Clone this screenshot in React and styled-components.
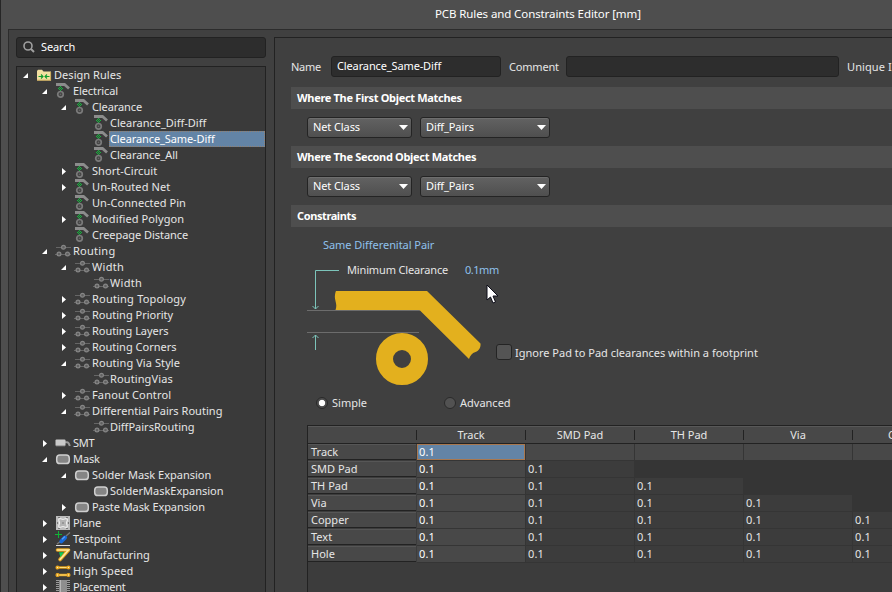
import React from "react"
import styled, { createGlobalStyle, css } from "styled-components"

const GlobalStyle = createGlobalStyle`
  * {
    box-sizing: border-box;
  }
  body {
    margin: 0;
    background: #4e4e4e;
    color: #e6e6e6;
    font-family: "Noto Sans", "Open Sans", sans-serif;
    font-size: 11px;
    line-height: 16px;
  }
`

const Window = styled.div`
  width: 892px;
  height: 592px;
  display: flex;
  flex-direction: column;
  overflow: hidden;
  border-left: 1px solid #262626;
  white-space: nowrap;
`

const TitleBar = styled.header`
  flex: 0 0 29px;
  padding: 6px 0 0 434px;
  color: #fff;
  font-size: 11.5px;
  letter-spacing: -0.1px;
`

const Body = styled.div`
  flex: 1;
  min-height: 0;
  display: flex;
  gap: 8px;
  margin-left: 7px;
  padding: 7px 0 0 7px;
  border-top: 1px solid #2c2c2c;
  border-left: 1px solid #2c2c2c;
  background: #404040;
`

const Sidebar = styled.aside`
  flex: 0 0 250px;
  min-height: 0;
  display: flex;
  flex-direction: column;
  gap: 8px;
`

const fieldStyles = css`
  height: 21px;
  border: 1px solid #222;
  border-radius: 3px;
  background: #2d2d2d;
  color: #fff;
`

const SearchBox = styled.div`
  ${fieldStyles}
  flex: none;
  display: flex;
  align-items: center;
  gap: 6px;
  padding: 0 0 1px 6px;
  letter-spacing: -0.1px;
`

const Tree = styled.div`
  flex: 1;
  min-height: 0;
  overflow: hidden;
  border: 1px solid #222;
  border-bottom: 0;
  background: #3a3a3a;
`

const TreeRow = styled.div`
  display: flex;
  height: 16px;
  padding-left: ${({ $level }) => 6 + $level * 19}px;
`

const TreeLabel = styled.span`
  flex: ${({ $selected }) => ($selected ? 1 : "none")};
  margin-left: ${({ $level }) => ($level === 3 ? 0 : 1)}px;
  padding-left: 1px;
  letter-spacing: ${({ $track }) => $track || 0}px;
  ${({ $selected }) =>
    $selected &&
    css`
      background: #6384a6;
      color: #fff;
      outline: 1px dotted #94806e;
      outline-offset: -1px;
    `}
`

const Icon = styled.svg`
  flex: none;
  display: block;
`

const Details = styled.main`
  flex: 1;
  min-width: 0;
  display: flex;
  flex-direction: column;
  padding-left: 16px;
  border-top: 1px solid #222;
  border-left: 1px solid #222;
`

const NameRow = styled.div`
  display: flex;
  align-items: center;
  height: 21px;
  margin: 18px 0 10px;
`

const FieldLabel = styled.span`
  flex: none;
  width: ${({ $width }) => $width}px;
  padding-top: 1px;
  letter-spacing: ${({ $track }) => $track || 0}px;
`

const Field = styled.div`
  ${fieldStyles}
  flex: 0 0 ${({ $width }) => $width}px;
  margin-right: 8px;
  padding: 1px 5px;
  letter-spacing: -0.13px;
`

const SectionTitle = styled.h2`
  flex: none;
  height: 22px;
  margin: 0;
  padding: 3px 6px;
  background: #4e4e4e;
  color: #fff;
  font-size: 11px;
  line-height: 16px;
  font-weight: 700;
  letter-spacing: ${({ $track }) => $track}px;
`

const ComboRow = styled.div`
  display: flex;
  gap: 8px;
  padding: 8px 0 8px 16px;
`

const ComboBox = styled.div`
  display: flex;
  align-items: center;
  justify-content: space-between;
  width: ${({ $width }) => $width}px;
  height: 21px;
  padding: 0 3px 1px 5px;
  border: 1px solid #242424;
  border-radius: 3px;
  background: linear-gradient(#626262, #4f4f4f);
  box-shadow: inset 0 1px #6e6e6e;
  color: #fff;
  letter-spacing: -0.1px;
`

const Link = styled.span`
  color: #8fc0ec;
`

const PairTitle = styled.div`
  padding: 10px 0 0 32px;
  height: 35px;
  letter-spacing: -0.05px;
`

const Diagram = styled.div`
  position: relative;
  display: flex;
  height: 126px;
  padding-left: 16px;
`

/* sits over the clearance drawing */
const DiagramCaption = styled.div`
  position: absolute;
  left: 56px;
  top: 0;
  display: flex;
  gap: 17px;
  letter-spacing: -0.15px;

  ${Link} {
    letter-spacing: -0.5px;
  }
`

const Pointer = styled.svg`
  position: absolute;
  left: 195px;
  top: 22px;
`

const CheckOption = styled.label`
  display: flex;
  align-items: center;
  gap: 3px;
  height: 16px;
  margin: 82px 0 0 9px;

  span {
    padding-top: 2px;
  }
`

const CheckBox = styled.i`
  width: 16px;
  height: 16px;
  border: 1px solid #242424;
  border-radius: 3px;
  background: #545454;
`

const RadioRow = styled.div`
  display: flex;
  height: 37px;
  padding: 7px 0 0 25px;
`

const RadioOption = styled.label`
  display: flex;
  align-items: center;
  gap: 4px;
  width: 128px;
  height: 16px;
`

const RadioDot = styled.i`
  width: 12px;
  height: 12px;
  border: 1px solid #2a2a2a;
  border-radius: 50%;
  background: ${({ $checked }) =>
    $checked ? "radial-gradient(#fff 0 2.8px, #4c4c4c 3.6px)" : "#525252"};
`

const Matrix = styled.div`
  flex: 1;
  min-height: 0;
  margin-left: 16px;
  overflow: hidden;
  border-top: 1px solid #222;
  border-left: 1px solid #222;
  background: #3c3c3c;
`

const MatrixRow = styled.div`
  display: grid;
  grid-template-columns: repeat(6, 109px);
  height: 17px;
`

const MatrixHead = styled(MatrixRow)`
  width: 654px;
  height: 18px;
  align-items: center;
  border-top: 1px solid #585858;
  border-bottom: 1px solid #222;
  background: #484848;
`

const ColumnHead = styled.div`
  height: 10px;
  line-height: 10px;
  border-right: 1px solid #222;
  text-align: center;
`

const RowHead = styled.div`
  height: 16px;
  margin-right: 1px;
  padding-left: 3px;
  border-top: 1px solid #565656;
  border-bottom: 1px solid #222;
  background: #484848;
  line-height: 13px;
`

const cellColors = {
  open: "#484848",
  plain: "#3c3c3c",
  off: "#353535",
}

const Cell = styled.div`
  height: 17px;
  padding-left: 2px;
  border-right: 1px solid #353535;
  border-bottom: 1px solid #353535;
  background: ${({ $kind }) => cellColors[$kind]};
  color: ${({ $kind }) => ($kind === "open" ? "#fff" : "#e6e6e6")};
  line-height: 15px;
  letter-spacing: 0.1px;
  ${({ $selected }) =>
    $selected &&
    css`
      background: #6384a6;
      background-clip: padding-box;
      box-shadow: inset 0 0 0 1px #a9784f;
    `}
`

const ClearanceIcon = () => (
  <Icon width="16" height="16">
    <path d="M1 1.5h8.5L14 5.5" fill="none" stroke="#8c8c8c" strokeWidth="2.8" />
    <g fill="#13b93c" shapeRendering="crispEdges">
      {[[5, 3], [4, 4], [6, 4], [3, 5], [5, 5], [7, 5], [4, 6], [6, 6], [5, 7]].map(
        ([x, y]) => (
          <rect key={`${x}-${y}`} x={x} y={y} width="1" height="1" />
        )
      )}
    </g>
    <circle cx="5.5" cy="11.3" r="2.8" fill="#444" stroke="#7a7a7a" strokeWidth="1.7" />
    <circle cx="5.5" cy="11.3" r="0.8" fill="#6a6a6a" />
  </Icon>
)

const RoutingIcon = () => (
  <Icon width="16" height="16">
    <path d="M1 4.5h15M0 11.5h16" stroke="#666" />
    <g fill="#606060" stroke="#868686" strokeWidth="1.2">
      <circle cx="8.5" cy="4.2" r="1.9" />
      <circle cx="4" cy="11" r="1.9" />
      <circle cx="12.5" cy="11" r="1.9" />
    </g>
  </Icon>
)

const SmtIcon = () => (
  <Icon width="16" height="16">
    <path d="M9 7.200h3.200c1.500 0 2 2 2.600 3.800" fill="none" stroke="#999" strokeWidth="2" />
    <rect x="0.5" y="4.5" width="10" height="6.5" rx="1" fill="#c9c9c9" />
    <path d="M1 10.8h9" stroke="#8f8f8f" />
  </Icon>
)

const MaskIcon = () => (
  <Icon width="16" height="16">
    <rect x="1.7" y="4" width="12.6" height="8.6" rx="3.2" fill="#858585" stroke="#cfcfcf" strokeWidth="1.5" />
  </Icon>
)

const PlaneIcon = () => (
  <Icon width="16" height="16">
    <rect x="1" y="1" width="14" height="14" fill="#bdbdbd" />
    <path
      d="M4 4c1.500-1 2.500.5 4 .5S10.500 3 12 4s-.5 2.500-.5 4 1.500 3 .5 4-2.500-.5-4-.5-3 1.500-4 .5.5-2.500.5-4S3 5 4 4z"
      fill="#b4b4b4"
      stroke="#eee"
      strokeWidth="1.2"
    />
    <path d="M3 2.500h2M11 2.500h2M3 13.500h2M11 13.500h2M7 8h2M2.500 7v2M13.500 7v2" stroke="#7a7a7a" />
  </Icon>
)

const TestpointIcon = () => (
  <Icon width="16" height="16">
    <path d="M11 5l4-3.5M2 13l4-3" stroke="#777" strokeWidth="1.4" />
    <path d="M6.300 10.300l3.800-3.800" stroke="#1668d8" strokeWidth="4" strokeLinecap="round" />
    <path d="M7 8.300l3-2.800" stroke="#56a2ff" strokeWidth="1.2" />
    <path d="M0 3.5h7M3.5 0v7" stroke="#10b437" />
    <path d="M1 14.5h14" stroke="#dcdcdc" />
  </Icon>
)

const ManufacturingIcon = () => (
  <Icon width="16" height="16">
    <path d="M2.5 3h11L5 12.5" fill="none" stroke="#e0a11c" strokeWidth="3.6" strokeLinecap="round" strokeLinejoin="round" />
    <path d="M2.5 3h11L5 12.5" fill="none" stroke="#ffe9a0" strokeWidth="1.6" strokeLinecap="round" />
    <path d="M4 5.2l1.5 5L9 5.2z" fill="#12c957" />
  </Icon>
)

const HighSpeedIcon = () => (
  <Icon width="16" height="16">
    <path d="M2 4.5h12M2 12h12" stroke="#e09a14" strokeWidth="2.4" />
    <path d="M3 4.5h10M3 12h10" stroke="#ffe07a" />
    <g fill="#fff0b0" stroke="#e8a41c" strokeWidth="1.3">
      <circle cx="2.500" cy="4.5" r="1.4" />
      <circle cx="13.500" cy="4.5" r="1.4" />
      <circle cx="2.500" cy="12" r="1.4" />
      <circle cx="13.500" cy="12" r="1.4" />
    </g>
  </Icon>
)

const PlacementIcon = () => (
  <Icon width="16" height="16">
    <path d="M2.5 1v15M13.5 1v15" stroke="#9a9a9a" strokeWidth="3" strokeDasharray="1 1" />
    <rect x="4" y="1" width="8" height="15" fill="#8e8e8e" />
    <path d="M5.5 1v15" stroke="#b8b8b8" />
  </Icon>
)

const FolderIcon = () => (
  <Icon width="16" height="16">
    <path d="M1 13.5V4l1-1.2h4L7.5 4.5H15v9z" fill="#f3dfa0" />
    <path d="M1 13.2h14M14.6 5v8.5" stroke="#c9a95b" />
    <path d="M2.5 9.5h4.5M13.5 9.5H9M5 7.500l2 2-2 2M11 7.500l-2 2 2 2" fill="none" stroke="#109a2e" strokeWidth="1.1" />
  </Icon>
)

const icons = {
  folder: FolderIcon,
  clearance: ClearanceIcon,
  routing: RoutingIcon,
  smt: SmtIcon,
  mask: MaskIcon,
  plane: PlaneIcon,
  testpoint: TestpointIcon,
  manufacturing: ManufacturingIcon,
  highSpeed: HighSpeedIcon,
  placement: PlacementIcon,
}

const Expander = ({ state }) => (
  <Icon width="13" height="16" fill="#fff">
    {state === "open" && <path d="M5 6v5H0z" />}
    {state === "closed" && <path d="M1 5l4 3.5L1 12z" />}
  </Icon>
)

// [level, expander, icon, label, letter spacing]
const rules = [
  [0, "open", "folder", "Design Rules", 0.05],
  [1, "open", "clearance", "Electrical", -0.1],
  [2, "open", "clearance", "Clearance", -0.1],
  [3, "", "clearance", "Clearance_Diff-Diff"],
  [3, "", "clearance", "Clearance_Same-Diff", -0.1],
  [3, "", "clearance", "Clearance_All", -0.05],
  [2, "closed", "clearance", "Short-Circuit", 0.05],
  [2, "closed", "clearance", "Un-Routed Net", 0.1],
  [2, "", "clearance", "Un-Connected Pin", 0.05],
  [2, "closed", "clearance", "Modified Polygon", 0.1],
  [2, "", "clearance", "Creepage Distance", -0.05],
  [1, "open", "routing", "Routing", 0.25],
  [2, "open", "routing", "Width", 0.3],
  [3, "", "routing", "Width", 0.3],
  [2, "closed", "routing", "Routing Topology", 0.2],
  [2, "closed", "routing", "Routing Priority"],
  [2, "closed", "routing", "Routing Layers", -0.05],
  [2, "closed", "routing", "Routing Corners"],
  [2, "open", "routing", "Routing Via Style", 0.08],
  [3, "", "routing", "RoutingVias", 0.12],
  [2, "closed", "routing", "Fanout Control", 0.15],
  [2, "open", "routing", "Differential Pairs Routing", 0.03],
  [3, "", "routing", "DiffPairsRouting"],
  [1, "closed", "smt", "SMT", -0.2],
  [1, "open", "mask", "Mask", -0.1],
  [2, "open", "mask", "Solder Mask Expansion"],
  [3, "", "mask", "SolderMaskExpansion"],
  [2, "closed", "mask", "Paste Mask Expansion", -0.08],
  [1, "closed", "plane", "Plane", -0.1],
  [1, "closed", "testpoint", "Testpoint"],
  [1, "closed", "manufacturing", "Manufacturing"],
  [1, "closed", "highSpeed", "High Speed", 0.1],
  [1, "closed", "placement", "Placement", -0.2],
]

const objects = ["Track", "SMD Pad", "TH Pad", "Via", "Copper", "Text", "Hole"]

const cellKind = (row, col) => {
  if (row === 0 || col === 0) return "open"
  return col > row ? "off" : "plain"
}

const RuleTree = () => (
  <Tree>
    {rules.map(([level, state, icon, label, track], i) => {
      const RuleIcon = icons[icon]
      return (
        <TreeRow key={i} $level={level}>
          <Expander state={state} />
          <RuleIcon />
          <TreeLabel $level={level} $track={track} $selected={label === "Clearance_Same-Diff"}>
            {label}
          </TreeLabel>
        </TreeRow>
      )
    })}
  </Tree>
)

const Combo = ({ width, children }) => (
  <ComboBox $width={width}>
    {children}
    <svg width="9" height="5" fill="#fff">
      <path d="M0 0h9L4.5 5z" />
    </svg>
  </ComboBox>
)

const ObjectMatch = ({ title }) => (
  <>
    <SectionTitle $track={-0.32}>{title}</SectionTitle>
    <ComboRow>
      <Combo width={105}>Net Class</Combo>
      <Combo width={130}>Diff_Pairs</Combo>
    </ComboRow>
  </>
)

const ClearanceDrawing = () => (
  <Icon width="180" height="126" viewBox="307 262 180 126" fill="none">
    <path d="M307 310.5h113M307 332.5h112" stroke="#6c6c6c" />
    <path
      d="M336 291H427L480.500 343.500C481 347 479 351 475.500 352C472 353 470 356 469 359L419.500 310H335.500C338 304 334 300 335 295C335.200 293 335.500 292 336 291Z"
      fill="#e3b01e"
    />
    <circle cx="402" cy="359" r="17.5" stroke="#e3b01e" strokeWidth="17" />
    <path d="M339 270.5H315.5V309M312.5 306l3 3 3-3M315.5 350V335M312.5 338l3-3 3 3" stroke="#7cc4ba" />
  </Icon>
)

const ConstraintMatrix = () => (
  <Matrix>
    <MatrixHead>
      <ColumnHead />
      {objects.slice(0, 5).map((name) => (
        <ColumnHead key={name}>{name}</ColumnHead>
      ))}
    </MatrixHead>
    {objects.map((name, row) => (
      <MatrixRow key={name}>
        <RowHead>{name}</RowHead>
        {objects.slice(0, 5).map((other, col) => (
          <Cell key={other} $kind={cellKind(row, col)} $selected={row === 0 && col === 0}>
            {col <= row && "0.1"}
          </Cell>
        ))}
      </MatrixRow>
    ))}
  </Matrix>
)

const App = () => (
  <>
    <GlobalStyle />
    <Window>
      <TitleBar>PCB Rules and Constraints Editor [mm]</TitleBar>
      <Body>
        <Sidebar>
          <SearchBox>
            <svg width="12" height="12" fill="none" stroke="#a0a0a0">
              <circle cx="5" cy="5" r="4" strokeWidth="1.6" />
              <path d="M8 8l3 3" strokeWidth="2" />
            </svg>
            Search
          </SearchBox>
          <RuleTree />
        </Sidebar>
        <Details>
          <NameRow>
            <FieldLabel $width={40} $track={-0.3}>Name</FieldLabel>
            <Field $width={170}>Clearance_Same-Diff</Field>
            <FieldLabel $width={57} $track={-0.2}>Comment</FieldLabel>
            <Field $width={273} />
            <FieldLabel $width={60} $track={0.1}>Unique ID</FieldLabel>
          </NameRow>
          <ObjectMatch title="Where The First Object Matches" />
          <ObjectMatch title="Where The Second Object Matches" />
          <SectionTitle $track={-0.4}>Constraints</SectionTitle>
          <PairTitle>
            <Link>Same Differenital Pair</Link>
          </PairTitle>
          <Diagram>
            <ClearanceDrawing />
            <DiagramCaption>
              <span>Minimum Clearance</span>
              <Link>0.1mm</Link>
            </DiagramCaption>
            <CheckOption>
              <CheckBox />
              <span>Ignore Pad to Pad clearances within a footprint</span>
            </CheckOption>
            <Pointer width="13" height="21">
              <path d="M1 1v15l3.5-3 2.5 6 2.5-1-2.5-6H12z" fill="#fff" stroke="#0c0c18" />
            </Pointer>
          </Diagram>
          <RadioRow>
            <RadioOption>
              <RadioDot $checked />
              Simple
            </RadioOption>
            <RadioOption>
              <RadioDot />
              Advanced
            </RadioOption>
          </RadioRow>
          <ConstraintMatrix />
        </Details>
      </Body>
    </Window>
  </>
)

export default App
